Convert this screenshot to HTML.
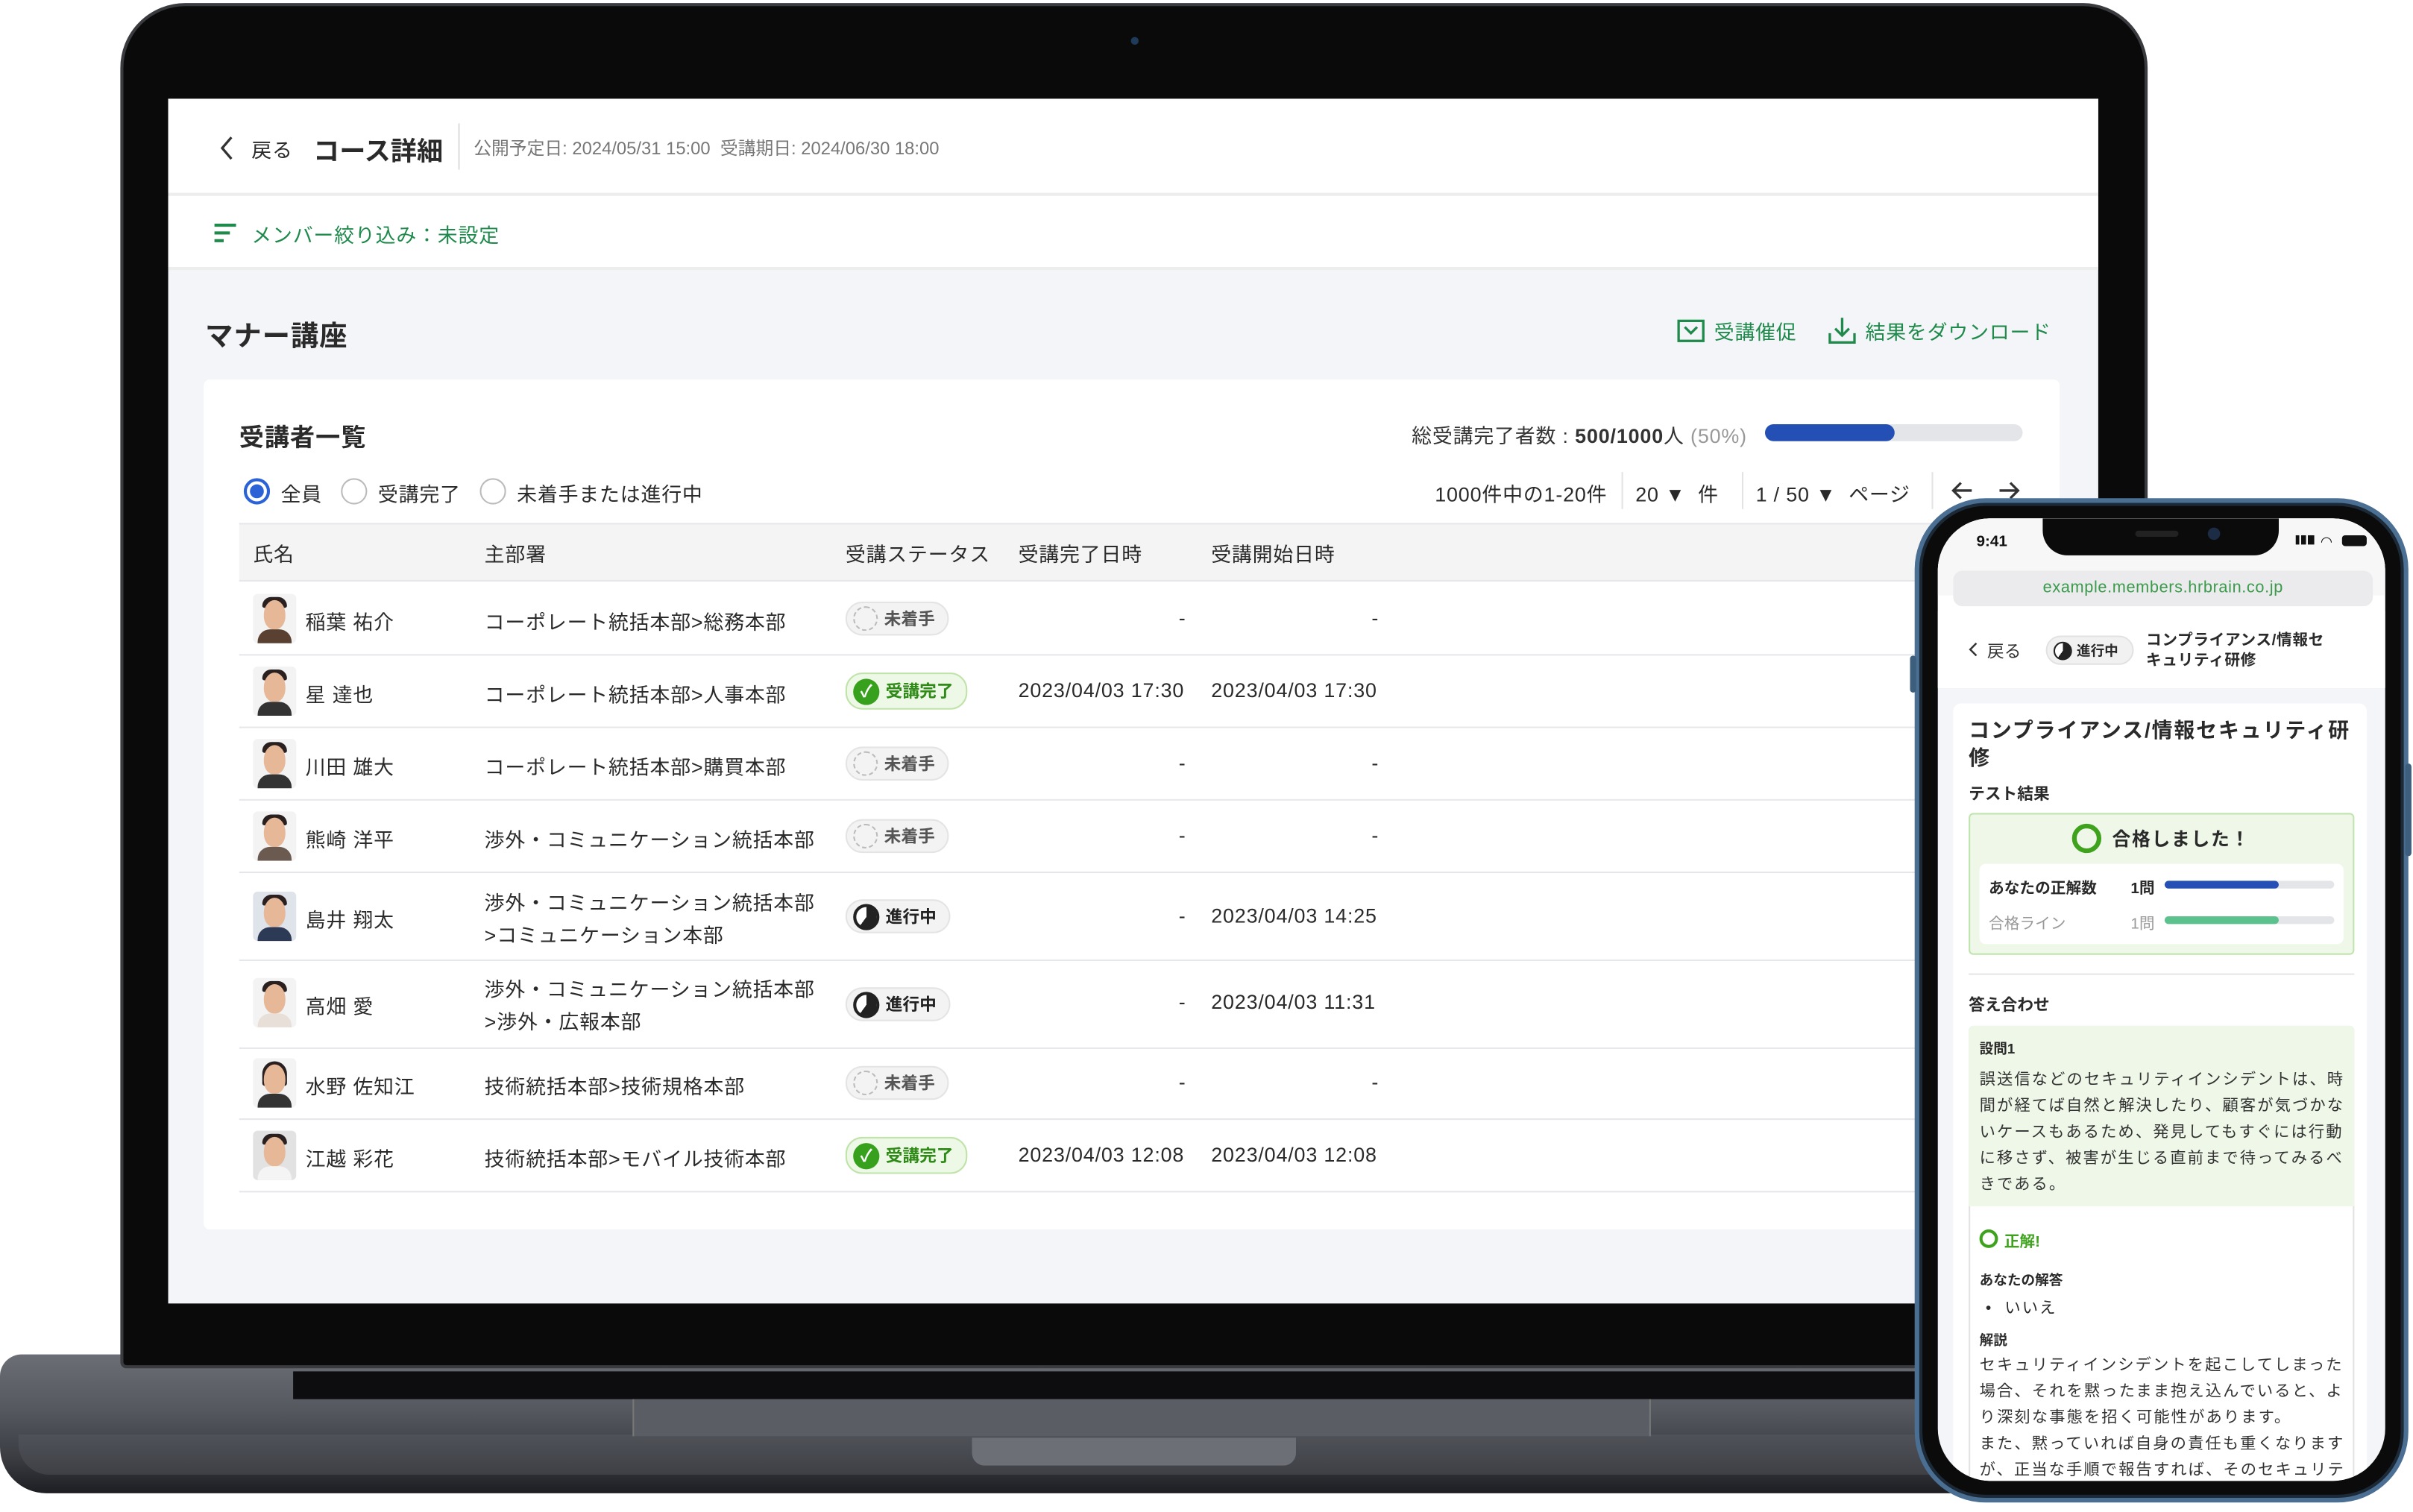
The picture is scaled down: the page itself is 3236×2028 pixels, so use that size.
<!DOCTYPE html>
<html><head><meta charset="utf-8">
<style>
*{margin:0;padding:0;box-sizing:border-box}
html,body{width:3236px;height:2027px;overflow:hidden;background:#fff}
#s{position:absolute;left:0;top:0;width:1564px;height:980px;transform:scale(2.06905);transform-origin:0 0;font-family:"Liberation Sans","Noto Sans CJK JP",sans-serif;color:#2a2a2a}
.a{position:absolute;white-space:nowrap}
.t{font-size:13px;letter-spacing:0.4px}
.line{position:absolute;height:1px;background:#e6e7ea}
.pill{position:absolute;height:22px;border-radius:11px;font-size:11px;font-weight:bold;display:flex;align-items:center;padding:0 8px 0 4px;gap:4px}
.ns{background:#f3f3f3;border:1px solid #e4e4e4;color:#555}
.dn{background:#edf8e6;border:1px solid #bfe3a9;color:#2f8a17}
.ip{background:#f3f3f3;border:1px solid #e4e4e4;color:#222}
.av{position:absolute;width:28px;height:32px;border-radius:3px;overflow:hidden;background:#f3f3f3}
.av i{position:absolute;left:7px;top:4px;width:14px;height:19px;border-radius:50% 50% 45% 45%;background:#e7b898}
.av b{position:absolute;left:6px;top:2px;width:16px;height:7px;border-radius:9px 9px 2px 2px;background:#2a2020}
.av u{position:absolute;left:3px;top:23px;width:22px;height:12px;border-radius:8px 8px 0 0;background:#333}
</style></head><body><div id="s">

<!-- laptop base -->
<div class="a" style="left:0;top:878px;width:1490px;height:90px;background:linear-gradient(#6b6e75,#55585f 40%,#3a3c42 75%,#1d1e22);border-radius:14px 14px 30px 30px"></div>
<div class="a" style="left:12px;top:930px;width:1470px;height:26px;background:linear-gradient(#4f5258,#3e4046);border-radius:0 0 20px 20px"></div>
<div class="a" style="left:190px;top:889px;width:1100px;height:18px;background:#0d0d0f"></div>
<div class="a" style="left:410px;top:907px;width:660px;height:24px;background:#5a5d63;border-left:1px solid #777;border-right:1px solid #777"></div>
<div class="a" style="left:630px;top:932px;width:210px;height:18px;background:#6c6f76;border-radius:0 0 8px 8px"></div>

<!-- laptop lid -->
<div class="a" style="left:78px;top:2px;width:1314px;height:885px;background:#0a0a0a;border-radius:42px 42px 4px 4px;border:2px solid #3a3b3f"></div>
<div class="a" style="left:733px;top:24px;width:5px;height:5px;border-radius:50%;background:#1f3b5a"></div>

<!-- screen -->
<div class="a" style="left:109px;top:64px;width:1251px;height:781px;background:#f4f5f8;overflow:hidden">
  <div class="a" style="left:0;top:0;width:1251px;height:63px;background:#fff;border-bottom:2px solid #eceded"></div>
  <div class="a" style="left:0;top:63px;width:1251px;height:48px;background:#fff;border-bottom:2px solid #eceded"></div>
  <svg class="a" style="left:33px;top:24px" width="10" height="16"><path d="M8 1L2 8l6 7" fill="none" stroke="#333" stroke-width="1.6"/></svg>
  <div class="a t" style="left:54px;top:23px">戻る</div>
  <div class="a" style="left:94px;top:20px;font-size:17px;font-weight:bold">コース詳細</div>
  <div class="a" style="left:188px;top:16px;width:1px;height:30px;background:#ddd"></div>
  <div class="a" style="left:198px;top:24px;font-size:11.5px;color:#777">公開予定日: 2024/05/31 15:00&nbsp;&nbsp;受講期日: 2024/06/30 18:00</div>
  <svg class="a" style="left:29px;top:80px" width="16" height="14"><path d="M1 2h14M1 7h10M1 12h6" stroke="#1f8a4c" stroke-width="2"/></svg>
  <div class="a t" style="left:54px;top:78px;color:#1f8a4c">メンバー絞り込み：未設定</div>
  <div class="a" style="left:24px;top:140px;font-size:18px;font-weight:bold;letter-spacing:0.5px">マナー講座</div>
  <svg class="a" style="left:978px;top:143px" width="18" height="15"><rect x="1" y="1" width="16" height="13" fill="none" stroke="#1f8a4c" stroke-width="1.6"/><path d="M5 5l4 4 4-4" fill="none" stroke="#1f8a4c" stroke-width="1.6"/></svg>
  <div class="a t" style="left:1002px;top:141px;color:#1f8a4c">受講催促</div>
  <svg class="a" style="left:1076px;top:141px" width="18" height="18"><path d="M9 1v11M4.5 8l4.5 4.5 4.5-4.5M1 11v6h16v-6" fill="none" stroke="#1f8a4c" stroke-width="1.6"/></svg>
  <div class="a t" style="left:1100px;top:141px;color:#1f8a4c">結果をダウンロード</div>

  <!-- card -->
  <div class="a" style="left:23px;top:182px;width:1203px;height:551px;background:#fff;border-radius:4px"></div>
  <div class="a" style="left:46px;top:206px;font-size:16px;font-weight:bold;letter-spacing:0.5px">受講者一覧</div>
  <div class="a t" style="left:806px;top:208px;color:#333">総受講完了者数 : <b>500/1000</b>人 <span style="color:#999">(50%)</span></div>
  <div class="a" style="left:1035px;top:211px;width:167px;height:11px;border-radius:6px;background:#e4e5e8"></div>
  <div class="a" style="left:1035px;top:211px;width:84px;height:11px;border-radius:6px;background:#2450b5"></div>
  <div class="a" style="left:49px;top:246px;width:17px;height:17px;border-radius:50%;border:2px solid #2b62d6"></div>
  <div class="a" style="left:53px;top:250px;width:9px;height:9px;border-radius:50%;background:#2b62d6"></div>
  <div class="a t" style="left:73px;top:246px">全員</div>
  <div class="a" style="left:112px;top:246px;width:17px;height:17px;border-radius:50%;border:1.5px solid #bbb"></div>
  <div class="a t" style="left:136px;top:246px">受講完了</div>
  <div class="a" style="left:202px;top:246px;width:17px;height:17px;border-radius:50%;border:1.5px solid #bbb"></div>
  <div class="a t" style="left:226px;top:246px">未着手または進行中</div>
  <div class="a t" style="left:821px;top:246px">1000件中の1-20件</div>
  <div class="a" style="left:942px;top:242px;width:1px;height:24px;background:#e3e3e3"></div>
  <div class="a t" style="left:951px;top:246px">20 &#9660;&nbsp;&nbsp;件</div>
  <div class="a" style="left:1020px;top:242px;width:1px;height:24px;background:#e3e3e3"></div>
  <div class="a t" style="left:1029px;top:246px">1 / 50 &#9660;&nbsp;&nbsp;ページ</div>
  <div class="a" style="left:1143px;top:242px;width:1px;height:24px;background:#e3e3e3"></div>
  <svg class="a" style="left:1155px;top:247px" width="46" height="14"><path d="M14 7H2M7 2L2 7l5 5M32 7h12M39 2l5 5-5 5" fill="none" stroke="#333" stroke-width="1.6"/></svg>

  <div class="a" style="left:46px;top:275px;width:1156px;height:38px;background:#f4f4f5;border-top:1px solid #e6e7ea;border-bottom:1px solid #e6e7ea"></div>
  <div class="a t" style="left:55px;top:285px">氏名</div>
  <div class="a t" style="left:205px;top:285px">主部署</div>
  <div class="a t" style="left:439px;top:285px">受講ステータス</div>
  <div class="a t" style="left:551px;top:285px">受講完了日時</div>
  <div class="a t" style="left:676px;top:285px">受講開始日時</div>
</div>

<!-- table rows -->
<div id="rows">
<div class="line" style="left:155px;top:424px;width:1156px"></div>
<div class="line" style="left:155px;top:471px;width:1156px"></div>
<div class="line" style="left:155px;top:518px;width:1156px"></div>
<div class="line" style="left:155px;top:565px;width:1156px"></div>
<div class="line" style="left:155px;top:622px;width:1156px"></div>
<div class="line" style="left:155px;top:679px;width:1156px"></div>
<div class="line" style="left:155px;top:725px;width:1156px"></div>
<div class="line" style="left:155px;top:772px;width:1156px"></div>

<div class="av" style="left:164px;top:385px"><b></b><i></i><u style="background:#5a4030"></u></div>
<div class="a t" style="left:198px;top:393px">稲葉 祐介</div>
<div class="a t" style="left:314px;top:393px">コーポレート統括本部&gt;総務本部</div>
<div class="pill ns" style="left:548px;top:390px"><span style="width:16px;height:16px;border-radius:50%;border:1.5px dashed #bbb;display:inline-block"></span>未着手</div>
<div class="a t" style="left:764px;top:393px">-</div><div class="a t" style="left:889px;top:393px">-</div>

<div class="av" style="left:164px;top:432px"><b></b><i></i><u></u></div>
<div class="a t" style="left:198px;top:440px">星 達也</div>
<div class="a t" style="left:314px;top:440px">コーポレート統括本部&gt;人事本部</div>
<div class="pill dn" style="left:548px;top:436px;height:24px"><span style="width:17px;height:17px;border-radius:50%;background:#37a01c;color:#fff;font-size:11px;display:inline-flex;align-items:center;justify-content:center">✓</span>受講完了</div>
<div class="a t" style="left:660px;top:440px">2023/04/03 17:30</div><div class="a t" style="left:785px;top:440px">2023/04/03 17:30</div>

<div class="av" style="left:164px;top:479px"><b></b><i></i><u></u></div>
<div class="a t" style="left:198px;top:487px">川田 雄大</div>
<div class="a t" style="left:314px;top:487px">コーポレート統括本部&gt;購買本部</div>
<div class="pill ns" style="left:548px;top:484px"><span style="width:16px;height:16px;border-radius:50%;border:1.5px dashed #bbb;display:inline-block"></span>未着手</div>
<div class="a t" style="left:764px;top:487px">-</div><div class="a t" style="left:889px;top:487px">-</div>

<div class="av" style="left:164px;top:526px"><b></b><i></i><u style="background:#6a5a50"></u></div>
<div class="a t" style="left:198px;top:534px">熊崎 洋平</div>
<div class="a t" style="left:314px;top:534px">渉外・コミュニケーション統括本部</div>
<div class="pill ns" style="left:548px;top:531px"><span style="width:16px;height:16px;border-radius:50%;border:1.5px dashed #bbb;display:inline-block"></span>未着手</div>
<div class="a t" style="left:764px;top:534px">-</div><div class="a t" style="left:889px;top:534px">-</div>

<div class="av" style="left:164px;top:578px;background:#dfe3ea"><b></b><i></i><u style="background:#2c3a55"></u></div>
<div class="a t" style="left:198px;top:586px">島井 翔太</div>
<div class="a t" style="left:314px;top:575px;line-height:21px">渉外・コミュニケーション統括本部<br>&gt;コミュニケーション本部</div>
<div class="pill ip" style="left:548px;top:583px"><span style="width:17px;height:17px;border-radius:50%;border:2px solid #222;background:conic-gradient(#222 0 60%,#fff 60%);display:inline-block"></span>進行中</div>
<div class="a t" style="left:764px;top:586px">-</div><div class="a t" style="left:785px;top:586px">2023/04/03 14:25</div>

<div class="av" style="left:164px;top:634px"><b></b><i></i><u style="background:#e8e0d8"></u></div>
<div class="a t" style="left:198px;top:642px">高畑 愛</div>
<div class="a t" style="left:314px;top:631px;line-height:21px">渉外・コミュニケーション統括本部<br>&gt;渉外・広報本部</div>
<div class="pill ip" style="left:548px;top:640px"><span style="width:17px;height:17px;border-radius:50%;border:2px solid #222;background:conic-gradient(#222 0 60%,#fff 60%);display:inline-block"></span>進行中</div>
<div class="a t" style="left:764px;top:642px">-</div><div class="a t" style="left:785px;top:642px">2023/04/03 11:31</div>

<div class="av" style="left:164px;top:686px"><b style="height:16px"></b><i></i><u></u></div>
<div class="a t" style="left:198px;top:694px">水野 佐知江</div>
<div class="a t" style="left:314px;top:694px">技術統括本部&gt;技術規格本部</div>
<div class="pill ns" style="left:548px;top:691px"><span style="width:16px;height:16px;border-radius:50%;border:1.5px dashed #bbb;display:inline-block"></span>未着手</div>
<div class="a t" style="left:764px;top:694px">-</div><div class="a t" style="left:889px;top:694px">-</div>

<div class="av" style="left:164px;top:733px;background:#e2e2e2"><b></b><i></i><u style="background:#f4f4f4"></u></div>
<div class="a t" style="left:198px;top:741px">江越 彩花</div>
<div class="a t" style="left:314px;top:741px">技術統括本部&gt;モバイル技術本部</div>
<div class="pill dn" style="left:548px;top:737px;height:24px"><span style="width:17px;height:17px;border-radius:50%;background:#37a01c;color:#fff;font-size:11px;display:inline-flex;align-items:center;justify-content:center">✓</span>受講完了</div>
<div class="a t" style="left:660px;top:741px">2023/04/03 12:08</div><div class="a t" style="left:785px;top:741px">2023/04/03 12:08</div>
</div>

<!-- phone -->
<div class="a" style="left:1241px;top:323px;width:320px;height:651px;border-radius:46px;background:#0b0b0c;border:3px solid #4a6f92;box-shadow:inset 0 0 0 2px #1c2a38"></div>
<div class="a" style="left:1238px;top:425px;width:4px;height:24px;background:#3d5e7d;border-radius:2px"></div>
<div class="a" style="left:1559px;top:495px;width:4px;height:60px;background:#3d5e7d;border-radius:2px"></div>
<div class="a" style="left:1256px;top:336px;width:290px;height:624px;border-radius:34px;background:#f4f5f8;overflow:hidden">
  <div class="a" style="left:0;top:0;width:290px;height:110px;background:#fff"></div>
  <div class="a" style="left:0;top:0;width:290px;height:50px;background:#f7f7f8"></div>
  <div class="a" style="left:25px;top:10px;font-size:10px;font-weight:bold;color:#111">9:41</div>
  <div class="a" style="left:68px;top:0;width:153px;height:24px;background:#0b0b0c;border-radius:0 0 16px 16px"></div>
  <div class="a" style="left:128px;top:8px;width:28px;height:4px;background:#222;border-radius:2px"></div>
  <div class="a" style="left:175px;top:6px;width:8px;height:8px;border-radius:50%;background:#1c2c44"></div>
  <div class="a" style="left:232px;top:11px;width:12px;height:6px;background:linear-gradient(90deg,#111 20%,transparent 20% 30%,#111 30% 55%,transparent 55% 65%,#111 65%)"></div>
  <div class="a" style="left:248px;top:10px;font-size:9px;color:#111">&#x25E0;</div>
  <div class="a" style="left:262px;top:11px;width:16px;height:7px;border-radius:2px;background:#111"></div>
  <div class="a" style="left:10px;top:34px;width:272px;height:23px;border-radius:6px;background:#ebebed;color:#3b9a4b;font-size:10.5px;letter-spacing:0.3px;text-align:center;line-height:23px">example.members.hrbrain.co.jp</div>
  <div class="a" style="left:0;top:60px;width:290px;height:50px;background:#fff"></div>
  <svg class="a" style="left:20px;top:80px" width="6" height="10"><path d="M5 1L1 5l4 4" fill="none" stroke="#333" stroke-width="1.2"/></svg>
  <div class="a" style="left:32px;top:78px;font-size:11px;color:#333">戻る</div>
  <div class="a" style="left:70px;top:76px;width:57px;height:19px;border-radius:10px;background:#f1f1f1;border:1px solid #e2e2e2;font-size:9px;font-weight:bold;display:flex;align-items:center;padding-left:4px;gap:3px"><span style="width:12px;height:12px;border-radius:50%;border:1.5px solid #222;background:conic-gradient(#222 0 60%,#fff 60%);display:inline-block"></span>進行中</div>
  <div class="a" style="left:135px;top:73px;font-size:10px;font-weight:bold;line-height:13px;letter-spacing:0.3px">コンプライアンス/情報セ<br>キュリティ研修</div>
  <div class="a" style="left:10px;top:120px;width:268px;height:520px;background:#fff;border-radius:5px"></div>
  <div class="a" style="left:20px;top:129px;font-size:13.5px;font-weight:bold;line-height:18px;white-space:normal;width:252px;letter-spacing:0.9px">コンプライアンス/情報セキュリティ研修</div>
  <div class="a" style="left:20px;top:171px;font-size:10.5px;font-weight:bold">テスト結果</div>
  <div class="a" style="left:20px;top:191px;width:250px;height:92px;background:#eef7e8;border:1px solid #c0e4ad;border-radius:3px"></div>
  <div class="a" style="left:87px;top:198px;width:19px;height:19px;border-radius:50%;border:3px solid #3ea21c"></div>
  <div class="a" style="left:113px;top:199px;font-size:12px;font-weight:bold;letter-spacing:0.8px">合格しました！</div>
  <div class="a" style="left:27px;top:224px;width:236px;height:52px;background:#fff;border-radius:4px"></div>
  <div class="a" style="left:33px;top:231px;font-size:10px;font-weight:bold">あなたの正解数</div>
  <div class="a" style="left:125px;top:231px;font-size:10px;font-weight:bold">1問</div>
  <div class="a" style="left:147px;top:235px;width:110px;height:5px;border-radius:3px;background:#e4e5e8"></div>
  <div class="a" style="left:147px;top:235px;width:74px;height:5px;border-radius:3px;background:#2450b5"></div>
  <div class="a" style="left:33px;top:254px;font-size:10px;color:#999">合格ライン</div>
  <div class="a" style="left:125px;top:254px;font-size:10px;color:#999">1問</div>
  <div class="a" style="left:147px;top:258px;width:110px;height:5px;border-radius:3px;background:#e4e5e8"></div>
  <div class="a" style="left:147px;top:258px;width:74px;height:5px;border-radius:3px;background:#5bc28e"></div>
  <div class="a" style="left:20px;top:295px;width:250px;height:1px;background:#e6e6e6"></div>
  <div class="a" style="left:20px;top:308px;font-size:10.5px;font-weight:bold">答え合わせ</div>
  <div class="a" style="left:20px;top:329px;width:250px;height:300px;border:1px solid #e2e2e2;border-radius:3px"></div>
  <div class="a" style="left:20px;top:329px;width:250px;height:117px;background:#eef7e8;border-radius:3px 3px 0 0"></div>
  <div class="a" style="left:27px;top:337px;font-size:9px;font-weight:bold">設問1</div>
  <div class="a" style="left:27px;top:356px;font-size:10.3px;line-height:17px;white-space:normal;width:240px;color:#333;letter-spacing:1px">誤送信などのセキュリティインシデントは、時間が経てば自然と解決したり、顧客が気づかないケースもあるため、発見してもすぐには行動に移さず、被害が生じる直前まで待ってみるべきである。</div>
  <div class="a" style="left:27px;top:461px;width:12px;height:12px;border-radius:50%;border:2px solid #3ea21c"></div>
  <div class="a" style="left:43px;top:460px;font-size:10px;font-weight:bold;color:#3ea21c">正解!</div>
  <div class="a" style="left:27px;top:487px;font-size:9px;font-weight:bold">あなたの解答</div>
  <div class="a" style="left:31px;top:503px;font-size:10.3px;letter-spacing:1px">•&nbsp; いいえ</div>
  <div class="a" style="left:27px;top:526px;font-size:9px;font-weight:bold">解説</div>
  <div class="a" style="left:27px;top:541px;font-size:10.3px;line-height:17px;white-space:normal;width:240px;color:#333;letter-spacing:1px">セキュリティインシデントを起こしてしまった場合、それを黙ったまま抱え込んでいると、より深刻な事態を招く可能性があります。<br>また、黙っていれば自身の責任も重くなりますが、正当な手順で報告すれば、そのセキュリティ</div>
</div>

</div></body></html>
